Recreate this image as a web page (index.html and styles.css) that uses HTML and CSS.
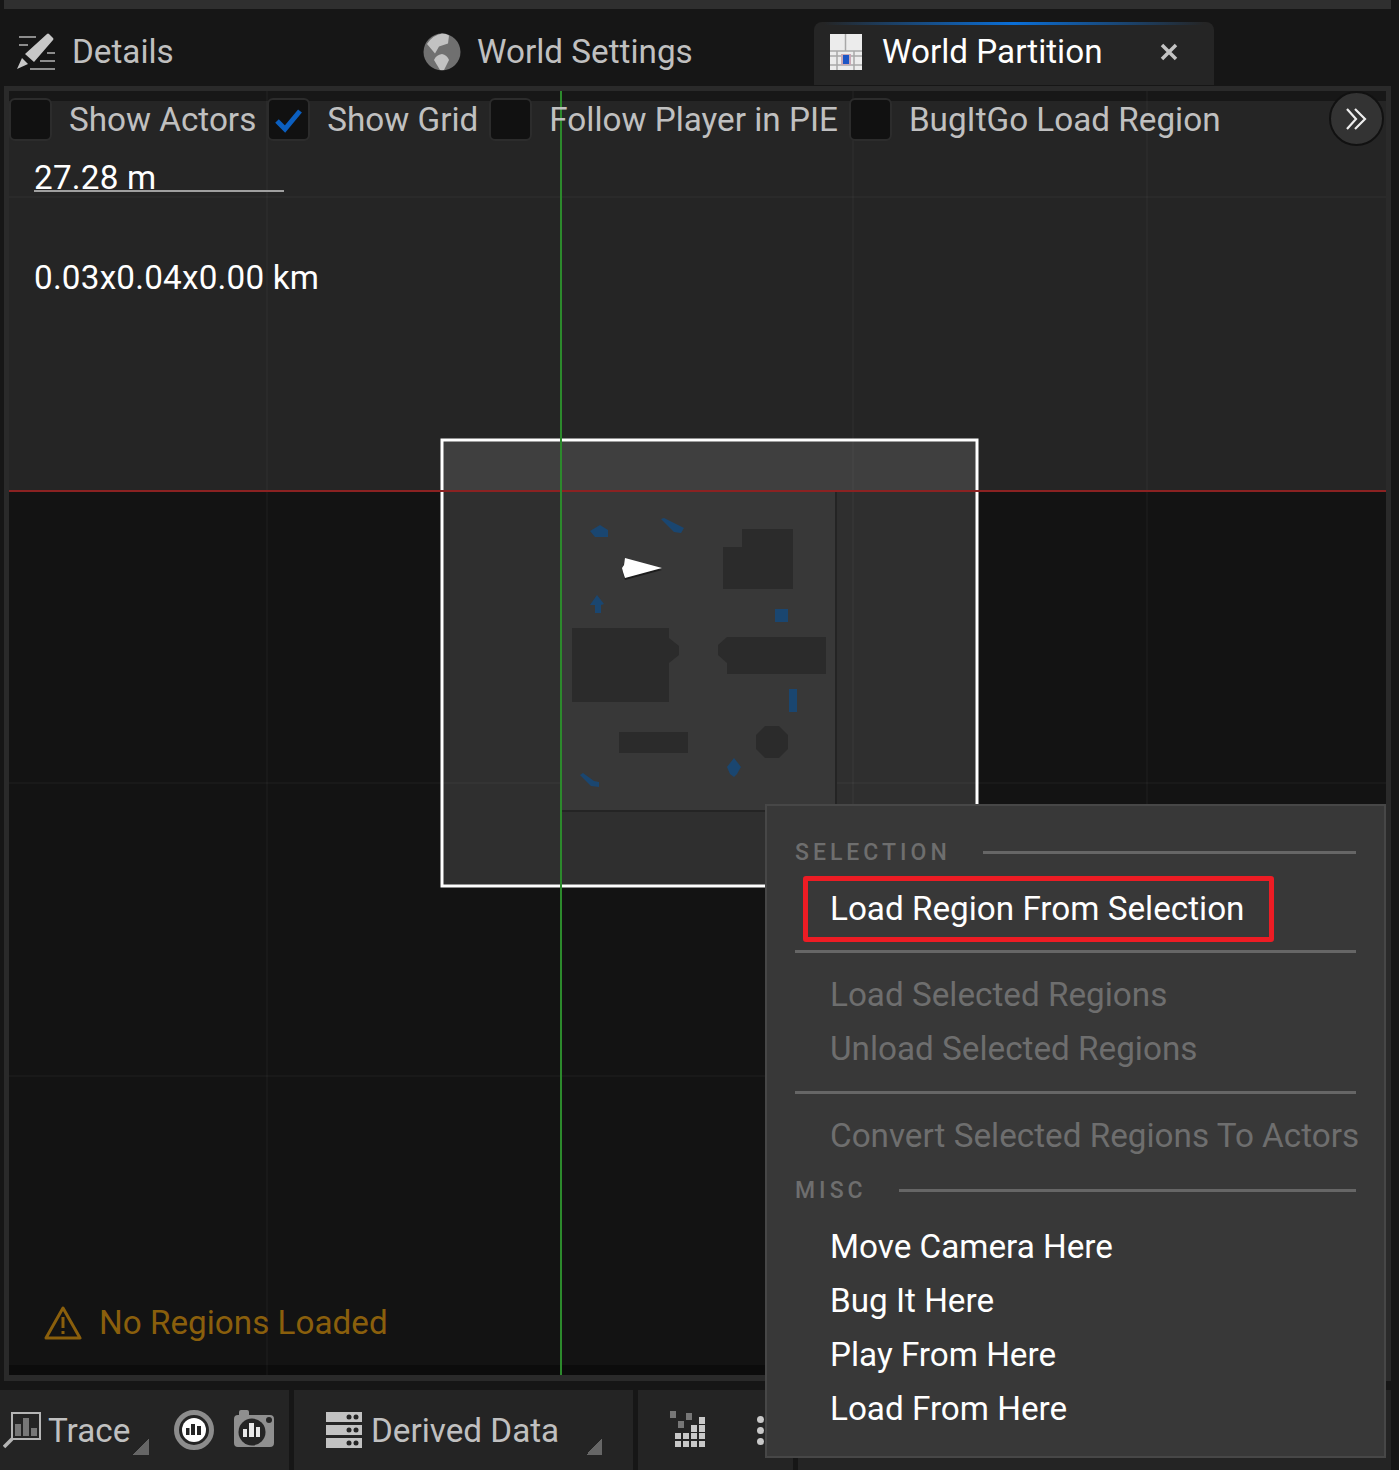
FILE: index.html
```html
<!DOCTYPE html>
<html lang="en">

<head>
  <meta charset="UTF-8">
  <title>World Partition</title>
  <link rel="stylesheet" href="styles.css">
</head>

<body>

  <div class="topbar"></div>

  <div class="tabs">
    <div class="tab tab-details">
      <svg class="tab-icon" viewBox="0 0 38 38">
        <path d="M2 4h17M2 12h9M30 20h8M23 28h15M13 36h25" stroke="#8c8c8c" stroke-width="2" fill="none" />
        <path d="M30 1q1-1 2 0l4 4q1 1 0 2L17 29l-9-8z" fill="#c8c8c8" />
        <path d="M5 25l6 6-11 5z" fill="#c8c8c8" />
      </svg>
      <span>Details</span>
    </div>
    <div class="tab tab-world">
      <svg class="tab-icon" viewBox="0 0 38 38">
        <circle cx="19" cy="19" r="18.500" fill="#707070" />
        <path d="M4 11Q10 2 19 .600q4 0 7 2l-1 8-9 3-4 7z" fill="#c2c2c2" />
        <path d="M19 21q5 1 7 6l-5 10h-4l-6-10q2-5 8-6z" fill="#c2c2c2" />
      </svg>
      <span>World Settings</span>
    </div>
    <div class="tab tab-active">
      <svg class="tab-icon tab-icon-grid" viewBox="0 0 32 36">
        <rect width="32" height="36" fill="#ececec" />
        <path d="M15.500 0v17M0 17h32M0 22h32M0 31h32M7 17v19M24 17v19" stroke="#a8a8a8" stroke-width="1.500" />
        <rect x="11" y="20" width="10" height="11" fill="#c9a8b4" />
        <rect x="13" y="21" width="6" height="9" fill="#1c55c5" />
      </svg>
      <span>World Partition</span>
      <svg class="tab-close" viewBox="0 0 18 18">
        <path d="M2 2l14 14M16 2L2 16" stroke="#c4c4c4" stroke-width="3.500" />
      </svg>
    </div>
  </div>

  <div class="panel">
    <div class="viewport">
      <svg class="map" viewBox="9 91 1377 1284">
        <rect x="9" y="91" width="1377" height="400" fill="#252525" />
        <rect x="9" y="91" width="1377" height="10" fill="#171717" />
        <rect x="9" y="1365" width="1377" height="10" fill="#0c0c0c" />

        <path d="M267 91V1375M853 91V1375M1147 91V1375M9 197H1386M9 783H1386M9 1076H1386" stroke="#fff" stroke-opacity="0.060" />

        <!-- selected area -->
        <rect x="442" y="440" width="535" height="446" fill="#fff" fill-opacity="0.120" />
        <rect x="561" y="491" width="275" height="320" fill="#383838" />
        <path d="M561 811H836V491" stroke="#242424" stroke-width="2" fill="none" />

        <g class="map-soft" fill="#2b2b2b">
          <path d="M742 529h51v60h-70v-42h19z" />
          <path d="M572 628h97v10l10 8v9l-10 8v39h-97z" />
          <path d="M727 637h99v37h-99v-11l-9-8v-10z" />
          <rect x="619" y="732" width="69" height="21" />
          <path d="M765 726h14l9 9v14l-9 9h-14l-9-9v-14z" />
        </g>
        <g class="map-soft" fill="#1a4670">
          <path d="M600 525l8 5v7h-13l-5-6z" />
          <path d="M661 519l3-1 20 10-3 5-7-1z" />
          <path d="M597 595l7 9-3 1v8h-6v-8h-5z" />
          <rect x="775" y="609" width="13" height="13" />
          <rect x="789" y="689" width="8" height="23" />
          <path d="M734 758l7 9-4 7-3 3-4-3-3-7z" />
          <path d="M580 775l3-2 11 8 5 1v5l-8-1z" />
        </g>
        <path class="map-soft" d="M625 560l37 10-37 10-3-10z" fill="#000" fill-opacity="0.500" />
        <path class="map-soft" d="M625 558l37 10-37 10-2-6-1-4 2-3z" fill="#fff" />

        <rect x="442" y="440" width="535" height="446" fill="none" stroke="#fff" stroke-width="3" />
        <path d="M9 491H1386" stroke="#8b2222" stroke-width="2" />
        <path d="M561 91V1375" stroke="#2c8a2c" stroke-width="2" />
      </svg>

      <div class="toolbar">
        <span class="check"></span>
        <span class="check-label">Show Actors</span>
        <span class="check">
          <svg viewBox="0 0 30 26">
            <path d="M3 14l8 8L26 4" stroke="#0b5fc0" stroke-width="5" fill="none" />
          </svg>
        </span>
        <span class="check-label">Show Grid</span>
        <span class="check"></span>
        <span class="check-label">Follow Player in PIE</span>
        <span class="check"></span>
        <span class="check-label">BugItGo Load Region</span>
      </div>

      <button class="more">
        <svg viewBox="0 0 24 24">
          <path d="M2 2l9 10-9 10M10 2l10 10-10 10" stroke="#eee" stroke-width="2.200" fill="none" />
        </svg>
      </button>

      <div class="scale">27.28 m</div>
      <div class="extent">0.03x0.04x0.00 km</div>

      <div class="warning">
        <svg viewBox="0 0 38 34">
          <path d="M19 2l17 30H2z" stroke="#8a5f0c" stroke-width="3" stroke-linejoin="round" fill="none" />
          <path d="M19 11v11M19 25v3" stroke="#8a5f0c" stroke-width="3" />
        </svg>
        <span>No Regions Loaded</span>
      </div>
    </div>
  </div>

  <div class="statusbar">
    <div class="status-section section-trace">
      <svg class="trace-icon" viewBox="0 0 38 38">
        <path d="M9 2h28v26H9z" fill="none" stroke="#b5b5b5" stroke-width="2" />
        <path d="M12 13h6v12h-6zM20 7h6v18h-6zM28 17h6v8h-6z" fill="#777" />
        <path d="M9 28l-8 8" stroke="#b5b5b5" stroke-width="3.500" />
      </svg>
      <span class="status-label">Trace</span>
      <span class="corner corner-trace"></span>
      <svg class="record-icon" viewBox="0 0 40 40">
        <circle cx="20" cy="20" r="17.500" fill="#242424" stroke="#8c8c8c" stroke-width="5" />
        <circle cx="20" cy="20" r="12" fill="#fff" />
        <path d="M12 18h3.500v7H12zM17 14h4v11h-4zM23 16h4v9h-4z" fill="#242424" />
      </svg>
      <svg class="camera-icon" viewBox="0 0 40 40">
        <path d="M5 5V2q0-2 2-2h6q2 0 2 2v3h21q4 0 4 4v24q0 4-4 4H4q-4 0-4-4V9q0-4 4-4z" fill="#8f8f8f" />
        <circle cx="18" cy="22" r="13.500" fill="#242424" />
        <circle cx="35" cy="10" r="3" fill="#242424" />
        <path d="M9 19h4v8H9zM15 13h5v14h-5zM22 17h4v10h-4z" fill="#e8e8e8" />
      </svg>
    </div>
    <div class="status-section section-derived">
      <svg class="server-icon" viewBox="0 0 36 36">
        <path d="M0 0h36v10H0zM0 13h36v10H0zM0 26h36v10H0z" fill="#c2c2c2" />
        <g fill="#242424">
          <circle cx="23" cy="5" r="2.500" /><circle cx="30" cy="5" r="2.500" />
          <circle cx="23" cy="18" r="2.500" /><circle cx="30" cy="18" r="2.500" />
          <circle cx="23" cy="31" r="2.500" /><circle cx="30" cy="31" r="2.500" />
        </g>
      </svg>
      <span class="status-label">Derived Data</span>
      <span class="corner corner-derived"></span>
    </div>
    <div class="status-section section-misc">
      <svg class="dots-icon" viewBox="0 0 36 36">
        <path d="M0 0h6v7H0zM16 2h6v7h-6zM8 10h6v7H8z" fill="#777" />
        <path d="M29 6h6v7h-6zM21 14h6v7h-6zM29 14h6v7h-6zM5 22h6v6H5zM13 22h6v6h-6zM21 22h6v6h-6zM29 22h6v6h-6zM5 30h6v6H5zM13 30h6v6h-6zM21 30h6v6h-6zM29 30h6v6h-6z" fill="#c8c8c8" />
      </svg>
      <span class="kebab"><i></i><i></i><i></i></span>
    </div>
    <div class="status-section section-rest"></div>
  </div>

  <div class="menu">
    <div class="menu-header menu-header-first"><span>SELECTION</span><hr></div>
    <div class="menu-item menu-item-marked">Load Region From Selection</div>
    <hr class="menu-sep menu-sep-first">
    <div class="menu-item menu-item-off menu-item-first">Load Selected Regions</div>
    <div class="menu-item menu-item-off">Unload Selected Regions</div>
    <hr class="menu-sep">
    <div class="menu-item menu-item-off menu-item-first">Convert Selected Regions To Actors</div>
    <div class="menu-header"><span>MISC</span><hr></div>
    <div class="menu-item menu-item-first">Move Camera Here</div>
    <div class="menu-item">Bug It Here</div>
    <div class="menu-item">Play From Here</div>
    <div class="menu-item">Load From Here</div>
  </div>

</body>

</html>
```

FILE: styles.css
```css
body {
  position: relative;
  width: 1399px;
  height: 1470px;
  margin: 0;
  overflow: hidden;
  background-color: #161616;
  color: #c0c0c0;
  font-family: Roboto, "Liberation Sans", sans-serif;
  font-size: 33.250px;
}

.topbar {
  height: 9px;
  margin: 0 8px 0 4px;
  background-color: #2f2f2f;
}

/* tabs */
.tabs {
  display: flex;
  align-items: flex-end;
  height: 76px;
}

.tab {
  display: flex;
  align-items: center;
  height: 63px;
  padding-bottom: 4px;
  box-sizing: border-box;
  white-space: nowrap;
}

.tab-icon {
  flex: none;
  width: 38px;
  height: 38px;
}

.tab-details {
  width: 406px;
  padding-left: 17px;
  gap: 17px;
}

.tab-world {
  width: 408px;
  padding-left: 17px;
  gap: 16px;
}

.tab-active {
  position: relative;
  width: 400px;
  padding-left: 16px;
  gap: 20px;
  border-radius: 8px 8px 0 0;
  background-color: #252525;
  color: #fff;
}

.tab-active::before {
  content: "";
  position: absolute;
  top: 0;
  left: 10px;
  right: 10px;
  height: 3px;
  background: linear-gradient(to right, #252525, #0a6fd8 50%, #252525);
}

.tab-icon-grid {
  width: 32px;
  height: 36px;
}

.tab-close {
  width: 18px;
  height: 18px;
  margin-left: 37px;
}

/* viewport */
.panel {
  width: 1387px;
  height: 1295px;
  margin-top: 1px;
  margin-left: 4px;
  padding: 5px;
  box-sizing: border-box;
  background-color: #2a2a2a;
}

.viewport {
  position: relative;
  width: 1377px;
  height: 1284px;
  background-color: #131313;
}

.map {
  display: block;
  width: 1377px;
  height: 1284px;
}

.map-soft {
  filter: blur(0.600px);
}

.toolbar {
  position: absolute;
  top: 7px;
  left: 0;
  display: flex;
  align-items: center;
  white-space: nowrap;
}

.check {
  display: flex;
  align-items: center;
  justify-content: center;
  width: 43px;
  height: 43px;
  box-sizing: border-box;
  border: 2px solid #2c2c2c;
  border-radius: 6px;
  background-color: #111;
}

.check svg {
  width: 30px;
  height: 26px;
}

.check-label {
  margin: 0 11px 0 17px;
}

.more {
  position: absolute;
  top: 0;
  right: 2px;
  display: flex;
  align-items: center;
  justify-content: center;
  width: 55px;
  height: 55px;
  padding: 0;
  border: 2px solid #111;
  border-radius: 50%;
  background-color: #333;
}

.more svg {
  width: 24px;
  height: 24px;
}

.scale {
  position: absolute;
  top: 66px;
  left: 25px;
  width: 250px;
  height: 33px;
  border-bottom: 2px solid #a0a0a0;
  color: #fff;
  letter-spacing: 0.200px;
  line-height: 42px;
}

.extent {
  position: absolute;
  top: 167px;
  left: 25px;
  color: #fff;
  letter-spacing: 0.200px;
  line-height: 40px;
}

.warning {
  position: absolute;
  top: 1212px;
  left: 35px;
  display: flex;
  align-items: center;
  gap: 17px;
  color: #8a5f0c;
  line-height: 40px;
}

.warning svg {
  width: 38px;
  height: 34px;
}

/* status bar */
.statusbar {
  position: absolute;
  top: 1390px;
  left: 0;
  display: flex;
  gap: 5px;
  width: 1399px;
  height: 80px;
}

.status-section {
  position: relative;
  display: flex;
  align-items: center;
  background-color: #242424;
  white-space: nowrap;
}

.section-trace {
  width: 289px;
  padding-left: 3px;
  box-sizing: border-box;
}

.section-derived {
  width: 339px;
  padding-left: 32px;
  box-sizing: border-box;
}

.section-misc {
  width: 155px;
  padding-left: 32px;
  box-sizing: border-box;
}

.section-rest {
  flex: 1;
  margin-right: 8px;
}

.trace-icon {
  width: 38px;
  height: 38px;
  margin-right: 7px;
}

.record-icon {
  position: absolute;
  left: 174px;
  width: 40px;
  height: 40px;
}

.camera-icon {
  position: absolute;
  left: 234px;
  width: 40px;
  height: 40px;
}

.server-icon {
  width: 36px;
  height: 36px;
  margin-right: 9px;
}

.corner {
  position: absolute;
  top: 49px;
  width: 16px;
  height: 16px;
  background: linear-gradient(to bottom right, transparent 50%, #666 50%);
}

.corner-trace {
  left: 133px;
}

.corner-derived {
  left: 292px;
}

.dots-icon {
  width: 36px;
  height: 36px;
  margin-top: -2px;
}

.kebab {
  display: flex;
  flex-direction: column;
  gap: 4px;
  margin-left: 51px;
}

.kebab i {
  width: 7px;
  height: 7px;
  border-radius: 50%;
  background-color: #c8c8c8;
}

/* context menu */
.menu {
  position: absolute;
  top: 804px;
  left: 765px;
  width: 621px;
  height: 654px;
  padding: 0 28px;
  box-sizing: border-box;
  border: 2px solid #474747;
  background-color: #383838;
  white-space: nowrap;
}

.menu-header {
  display: flex;
  align-items: center;
  height: 30px;
  margin-top: 13px;
  color: #6e6e6e;
  font-size: 23px;
  font-weight: 500;
  letter-spacing: 4px;
}

.menu-header-first {
  margin-top: 31px;
}

.menu-header hr {
  flex: 1;
  height: 3px;
  margin: 0 0 0 32px;
  border: none;
  background-color: #666;
}

.menu-item {
  height: 54px;
  padding-left: 35px;
  color: #fff;
  line-height: 56px;
}

.menu-item-first {
  margin-top: 14px;
}

.menu-item-off {
  color: #6e6e6e;
}

.menu-item-marked {
  width: 471px;
  height: 66px;
  margin: 9px 0 0 8px;
  padding-left: 22px;
  box-sizing: border-box;
  border: 5px solid #ed1c24;
  border-radius: 3px;
  line-height: 56px;
}

.menu-sep {
  height: 3px;
  margin: 16px 0 0;
  border: none;
  background-color: #666;
}

.menu-sep-first {
  margin-top: 8px;
}
```
